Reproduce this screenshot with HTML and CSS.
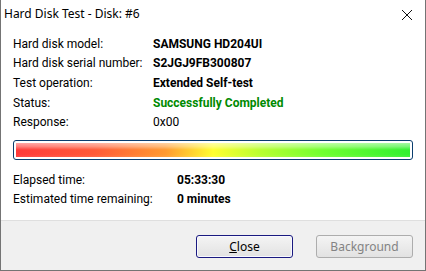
FILE: index.html
```html
<!DOCTYPE html>
<html>
<head>
<meta charset="utf-8">
<link rel="stylesheet" href="styles.css">
</head>
<body>
<div class="window">
  <div class="titlebar">
    <span class="title">Hard Disk Test - Disk: #6</span>
    <svg class="close-x" width="12" height="12" viewBox="0 0 12 12"><path d="M1 1 L11 11 M11 1 L1 11" stroke="#111" stroke-width="1" fill="none"/></svg>
  </div>
  <div class="content">
    <div class="info">
      <span class="label">Hard disk model:</span><span class="value bold">SAMSUNG HD204UI</span>
      <span class="label">Hard disk serial number:</span><span class="value bold">S2JGJ9FB300807</span>
      <span class="label">Test operation:</span><span class="value bold">Extended Self-test</span>
      <span class="label">Status:</span><span class="value bold ok">Successfully Completed</span>
      <span class="label">Response:</span><span class="value">0x00</span>
    </div>
    <div class="progress"><div class="fill"></div></div>
    <div class="times">
      <span class="label">Elapsed time:</span><span class="value bold">05:33:30</span>
      <span class="label">Estimated time remaining:</span><span class="value bold">0 minutes</span>
    </div>
  </div>
  <div class="footer">
    <button class="btn default"><u>C</u>lose</button>
    <button class="btn disabled">Background</button>
  </div>
</div>
</body>
</html>
```
FILE: styles.css
```css
html, body {
  margin: 0;
  padding: 0;
  background: #ffffff;
}
.window {
  width: 426px;
  height: 271px;
  box-sizing: border-box;
  border: 1px solid #747474;
  border-top: none;
  display: flex;
  flex-direction: column;
  font-family: Roboto, "Noto Sans", sans-serif;
  font-size: 12px;
  color: #000;
  background: #fff;
}
.titlebar {
  height: 30px;
  display: flex;
  align-items: center;
  justify-content: space-between;
  padding: 0 12px 3px 3px;
  box-sizing: border-box;
  font-family: "Noto Sans", sans-serif;
}
.title {
  font-size: 12px;
}
.close-x {
  display: block;
  margin-top: 2px;
}
.content {
  flex: 1;
  padding: 4px 12px 0 12px;
  display: flex;
  flex-direction: column;
}
.info {
  display: grid;
  grid-template-columns: 140px auto;
  grid-auto-rows: 19.6px;
  align-items: center;
}
.times {
  display: grid;
  grid-template-columns: 164px auto;
  grid-auto-rows: 19.6px;
  align-items: center;
  margin-top: 10px;
}
.label, .value {
  white-space: nowrap;
  line-height: 16px;
}
.bold { font-weight: bold; }
.ok { color: #008a00; }
.progress {
  margin-top: 8px;
  width: 400px;
  height: 20px;
  box-sizing: border-box;
  border: 1px solid #0b3d6e;
  border-radius: 3px;
  padding: 2px;
}
.fill {
  height: 100%;
  background:
    linear-gradient(to bottom, rgba(255,255,255,0.55) 0%, rgba(255,255,255,0.35) 25%, rgba(255,255,255,0) 50%, rgba(255,255,255,0) 80%, rgba(255,255,255,0.08) 100%),
    linear-gradient(to right, #ff3a3a 0%, #ff5a38 20%, #ff9a30 38%, #ffff30 50%, #b8ff30 62%, #70ff30 78%, #30f030 100%);
}
.footer {
  height: 50px;
  box-sizing: border-box;
  border-top: 1px solid #dfdfdf;
  background: #f0f0f0;
  display: flex;
  justify-content: flex-end;
  align-items: flex-start;
  gap: 23px;
  padding: 14px 12px 0 0;
}
.btn {
  width: 97px;
  height: 23px;
  box-sizing: border-box;
  font-family: "Noto Sans", sans-serif;
  font-size: 12px;
  padding: 0;
  border-radius: 3px;
  background: linear-gradient(to bottom, #f4f4f4, #e2e2e2);
}
.btn.default {
  border: 1px solid #1a1a80;
  box-shadow: inset 0 0 0 1px #f8f8ff;
  color: #000;
}
.btn.disabled {
  border: 1px solid #adadad;
  color: #838383;
}
```
